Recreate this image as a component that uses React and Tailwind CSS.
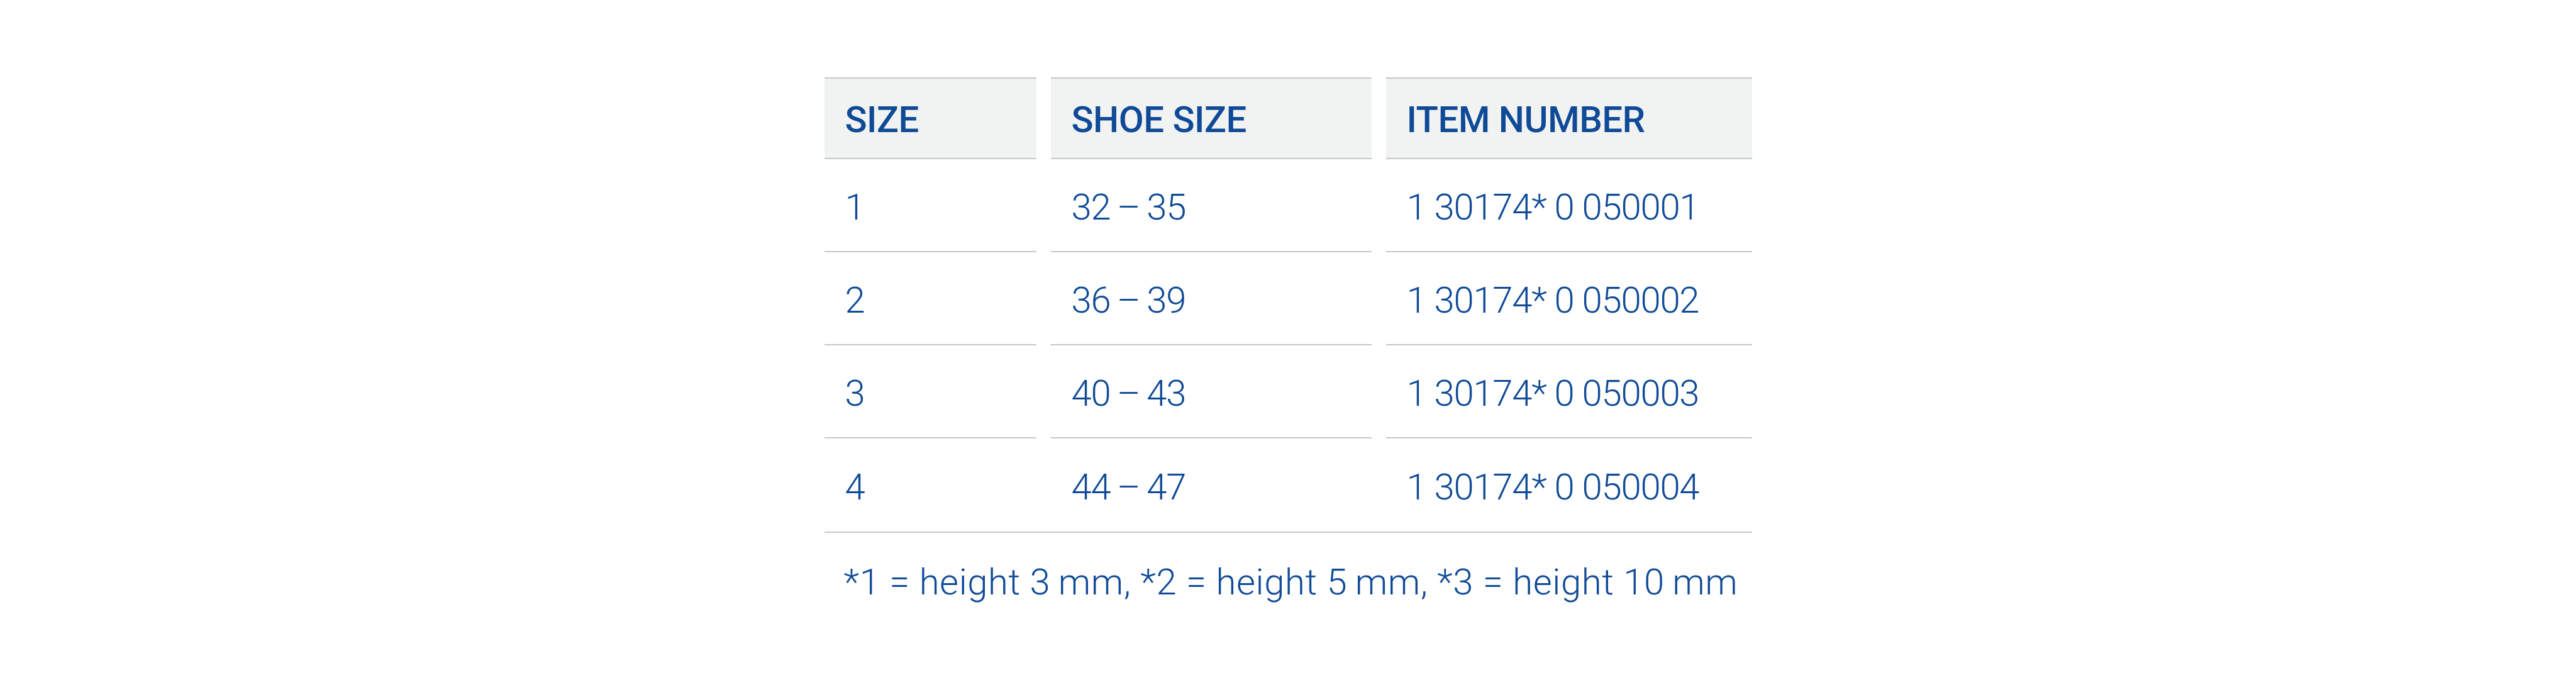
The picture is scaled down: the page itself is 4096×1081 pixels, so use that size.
const rows = [
  { size: '1', shoe: '32\u2009\u2013\u200935', item: '1 30174* 0 050001' },
  { size: '2', shoe: '36\u2009\u2013\u200939', item: '1 30174* 0 050002' },
  { size: '3', shoe: '40\u2009\u2013\u200943', item: '1 30174* 0 050003' },
  { size: '4', shoe: '44\u2009\u2013\u200947', item: '1 30174* 0 050004' },
];

const head = ['SIZE', 'SHOE SIZE', 'ITEM NUMBER'];

export default function App() {
  return (
    <div className="w-[4096px] h-[1081px] bg-white font-['Roboto',sans-serif] text-[#0f4a97] overflow-hidden">
      <div className="w-[1475px] mx-auto pt-[123px]">
        <div className="grid grid-cols-[337px_510px_582px] gap-x-[23px]">
          {head.map((h) => (
            <div
              key={h}
              className="h-[130px] bg-[#f1f2f2] border-t-2 border-b-2 border-[#c6c7c7] flex items-center pl-[33px] pt-[4px] text-[58px] font-medium tracking-[-0.5px]"
            >
              {h}
            </div>
          ))}
          {rows.map((r, i) => {
            const last = i === rows.length - 1;
            const cell = `h-[148px] flex items-center pl-[33px] pt-[6px] text-[58px] font-light tracking-[-1.2px] ${last ? '' : 'border-b-2 border-[#c6c7c7]'}`;
            return [
              <div key={r.size + 'a'} className={cell}>{r.size}</div>,
              <div key={r.size + 'b'} className={cell}>{r.shoe}</div>,
              <div key={r.size + 'c'} className={cell}>{r.item}</div>,
            ];
          })}
        </div>
        <div className="border-t-2 border-[#c6c7c7]" />
        <p className="pl-[31px] pt-[44px] text-[58px] font-light tracking-[0.6px] leading-[1.2] whitespace-nowrap">
          *1 = height 3{'\u2009'}mm, *2 = height 5{'\u2009'}mm, *3 = height 10{'\u2009'}mm
        </p>
      </div>
    </div>
  );
}
